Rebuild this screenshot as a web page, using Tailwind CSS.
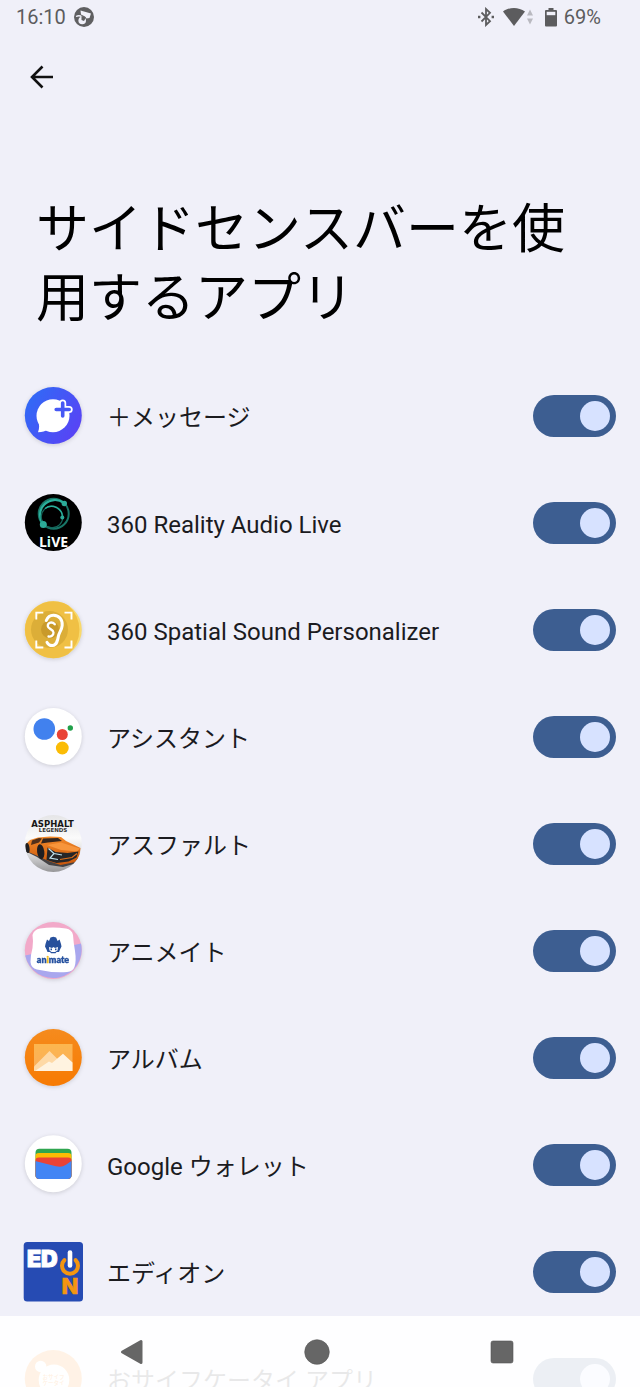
<!DOCTYPE html>
<html lang="ja">
<head>
    <meta charset="UTF-8">
    <meta name="viewport" content="width=device-width, initial-scale=1.0">
    <title>サイドセンスバーを使用するアプリ</title>
    <script src="https://cdn.jsdelivr.net/npm/@tailwindcss/browser@4"></script>
</head>
<body class="h-screen overflow-hidden bg-[#f0f0f9] text-[#1b1b1f] font-[Roboto,'Noto_Sans_CJK_JP',sans-serif]">
    <!-- Status bar -->
    <div class="flex h-[34px] items-center justify-between pl-4 pr-[39px] text-xl text-[#5c5c5e]">
        <div class="flex items-center gap-2">
            <span>16:10</span>
            <svg class="size-5" viewBox="0 0 20 20">
                <circle cx="10" cy="10" r="10" fill="#5f5f61"/>
                <path d="M6.500 3.500l10.500 3-1.500 4.500-3 .5-1.500-2-4-2z" fill="#f0f0f9"/>
                <circle cx="8.200" cy="13.500" r="3.800" fill="#f0f0f9"/>
                <path d="M2 9.500c2.500-1.200 4.500-.8 6 .5" fill="none" stroke="#f0f0f9" stroke-width="1.300"/>
                <path d="M7.500 9l4.500 1.500-2 3.500-2.500-1z" fill="#5f5f61"/>
            </svg>
        </div>
        <div class="flex items-center">
            <svg class="h-5 w-4" viewBox="0 0 16 20" fill="none" stroke="#5c5c5e" stroke-width="1.800">
                <path d="M3.500 5.500l8.500 8.700-4 3.800V2l4 3.800-8.500 8.700"/>
                <path d="M0 10h2.400M13.600 10H16" stroke-width="2.400"/>
            </svg>
            <svg class="ml-2 h-5 w-8" viewBox="0 0 32 20">
                <path d="M1 4.500C7.500-.3 16.500-.3 23 4.500L12 19z" fill="#5c5c5e"/>
                <path d="M25 8.500h6L28 2.500zM25 11.500h6l-3 6z" fill="#b9b9c0"/>
            </svg>
            <svg class="ml-[10px] h-5 w-4" viewBox="0 0 16 20">
                <path d="M4.500 1h5v2h2.500a1 1 0 0 1 1 1v14.500a1 1 0 0 1-1 1H2a1 1 0 0 1-1-1V4a1 1 0 0 1 1-1h2.500z" fill="#5c5c5e"/>
                <path d="M2.700 4.800h8.600v3.400H2.700z" fill="#f0f0f9"/>
            </svg>
            <span class="ml-1">69%</span>
        </div>
    </div>

    <!-- Header -->
    <header class="px-[26px] pt-[27px]">
        <button type="button" aria-label="戻る" class="block">
            <svg class="size-8" viewBox="0 0 32 32" fill="none" stroke="#111" stroke-width="2.600">
                <path d="M27 16H6M16.500 5.500L6 16l10.500 10.500"/>
            </svg>
        </button>
        <h1 class="mt-[103px] px-[10px] text-[53px] leading-[69px] text-black">サイドセンスバーを使用するアプリ</h1>
    </header>

    <!-- App list -->
    <ul class="mt-7">
        <li>
            <label class="flex h-[107px] items-center pl-[23px] pr-6">
                <svg class="size-[60px] shrink-0 drop-shadow-sm" viewBox="0 0 60 60">
                    <defs>
                        <linearGradient id="msg" x1="0" y1="0.200" x2="1" y2="0.800">
                            <stop offset="0" stop-color="#2f6bf6"/>
                            <stop offset="1" stop-color="#5b41f5"/>
                        </linearGradient>
                    </defs>
                    <circle cx="30.300" cy="29.500" r="28.500" fill="url(#msg)"/>
                    <circle cx="30" cy="29.700" r="16.500" fill="#fff"/>
                    <path d="M15 34c1.500 5 1.500 8 0 12.300 4.500 0 7-1 11-3z" fill="#fff"/>
                    <path d="M39.700 17v13M33.200 23.500h13" stroke="#fff" stroke-width="7" stroke-linecap="round"/>
                    <path d="M39.700 17v13M33.200 23.500h13" stroke="#4658f5" stroke-width="3.600" stroke-linecap="round"/>
                </svg>
                <span class="ml-6 flex-1 pt-1 text-2xl">＋メッセージ</span>
                <input type="checkbox" role="switch" checked class="h-[42px] w-[83px] shrink-0 appearance-none rounded-full bg-[#3d5e91] flex items-center justify-start checked:justify-end px-[6px] before:size-[30px] before:rounded-full before:bg-[#d7e2ff]">
            </label>
        </li>
        <li>
            <label class="flex h-[107px] items-center pl-[23px] pr-6">
                <svg class="size-[60px] shrink-0" viewBox="0 0 60 60">
                    <circle cx="30.300" cy="29.500" r="28.500" fill="#000"/>
                    <g fill="none" stroke="#2bb09c">
                        <circle cx="30.700" cy="20.700" r="15" stroke="#187567" stroke-width="2"/>
                        <path d="M20 31A15 15 0 0 1 41 10" stroke-width="2.200"/>
                        <circle cx="29" cy="24" r="10.800" stroke="#14665a" stroke-width="1.200"/>
                        <path d="M22 15.500a11 11 0 0 1 17.500 9" stroke-width="1.300"/>
                    </g>
                    <g fill="#2cab98">
                        <circle cx="41.300" cy="10.500" r="2.700"/>
                        <circle cx="20.300" cy="31.500" r="3.500"/>
                        <circle cx="39.300" cy="24.500" r="2"/>
                    </g>
                    <text x="30.500" y="54" text-anchor="middle" fill="#fff" font-family="Open Sans" font-weight="700" font-size="14">L<tspan fill="#c9fff4">i</tspan>VE</text>
                </svg>
                <span class="ml-6 flex-1 pt-1 text-2xl">360 Reality Audio Live</span>
                <input type="checkbox" role="switch" checked class="h-[42px] w-[83px] shrink-0 appearance-none rounded-full bg-[#3d5e91] flex items-center justify-start checked:justify-end px-[6px] before:size-[30px] before:rounded-full before:bg-[#d7e2ff]">
            </label>
        </li>
        <li>
            <label class="flex h-[107px] items-center pl-[23px] pr-6">
                <svg class="size-[60px] shrink-0 drop-shadow-sm" viewBox="0 0 60 60">
                    <circle cx="30.300" cy="29.700" r="28.500" fill="#f9d96b"/>
                    <path d="M45 5.200A28.500 28.500 0 1 0 45 54.200 32 32 0 0 0 45 5.200z" fill="#f0c044"/>
                    <circle cx="26.500" cy="29.500" r="18.500" fill="#dcae38"/>
                    <circle cx="27" cy="29.500" r="9" fill="#c99a2b"/>
                    <g fill="none" stroke="#fff">
                        <path d="M13.300 19.500V12.600h7M41.500 12.600h7v7M48.500 40.500v7h-7M20.300 47.500h-7v-7" stroke-width="1.900"/>
                        <path d="M23.300 20.500c1.500-3.700 4-5.300 7.300-5.200 5.700.2 9 4.500 8.600 10-.3 4.500-3 7-3.700 10.500-.8 4.500-1.500 9.400-6 9.800-3 .2-4.500-1.300-5.500-3.300" stroke-width="3" stroke-linecap="round"/>
                        <path d="M31.800 24.300c-2.800-3.300-7.200-1.600-7 1.800.2 3.200 5.600 2.900 5.700 6.400.1 3-2.500 4.300-5 4" stroke-width="2.300" stroke-linecap="round"/>
                    </g>
                </svg>
                <span class="ml-6 flex-1 pt-1 text-2xl">360 Spatial Sound Personalizer</span>
                <input type="checkbox" role="switch" checked class="h-[42px] w-[83px] shrink-0 appearance-none rounded-full bg-[#3d5e91] flex items-center justify-start checked:justify-end px-[6px] before:size-[30px] before:rounded-full before:bg-[#d7e2ff]">
            </label>
        </li>
        <li>
            <label class="flex h-[107px] items-center pl-[23px] pr-6">
                <svg class="size-[60px] shrink-0 drop-shadow-sm" viewBox="0 0 60 60">
                    <circle cx="30.300" cy="29.500" r="28.500" fill="#fff"/>
                    <circle cx="21.300" cy="22" r="10.800" fill="#4181ee"/>
                    <circle cx="39.300" cy="27.500" r="5.500" fill="#e94335"/>
                    <circle cx="39.300" cy="41" r="6.400" fill="#fbbc05"/>
                    <circle cx="47.300" cy="21" r="2.700" fill="#21a04a"/>
                </svg>
                <span class="ml-6 flex-1 pt-1 text-2xl">アシスタント</span>
                <input type="checkbox" role="switch" checked class="h-[42px] w-[83px] shrink-0 appearance-none rounded-full bg-[#3d5e91] flex items-center justify-start checked:justify-end px-[6px] before:size-[30px] before:rounded-full before:bg-[#d7e2ff]">
            </label>
        </li>
        <li>
            <label class="flex h-[107px] items-center pl-[23px] pr-6">
                <svg class="size-[60px] shrink-0" viewBox="0 0 60 60">
                    <defs>
                        <clipPath id="round"><circle cx="30.300" cy="29.500" r="28.500"/></clipPath>
                        <linearGradient id="road" x1="0" y1="0" x2="0" y2="1">
                            <stop offset="0" stop-color="#e4e4e6"/>
                            <stop offset="0.400" stop-color="#fbfbfb"/>
                            <stop offset="0.700" stop-color="#d4d4d6"/>
                            <stop offset="1" stop-color="#8f8f91"/>
                        </linearGradient>
                        <linearGradient id="paint" x1="0" y1="0" x2="0" y2="1">
                            <stop offset="0" stop-color="#f28a2a"/>
                            <stop offset="1" stop-color="#c9570c"/>
                        </linearGradient>
                    </defs>
                    <g clip-path="url(#round)">
                        <path d="M0 0h60v60H0z" fill="url(#road)"/>
                        <path d="M2 37l12 6 12 8 14 2 14-4 2-6-20-4z" fill="#454345"/>
                        <path d="M3 30l4-4 8-2.500 12-1 11 .5 5 4L57.500 34l-1 8-4 6-15 3-12-4-13-6-7-3-2.500-3z" fill="url(#paint)"/>
                        <path d="M9 26.500l7-2.500 3 .5-3 4-8 2.500z" fill="#51301b"/>
                        <path d="M20 24.500l15-.5 4 3-14 1.500-7 1z" fill="#33261f"/>
                        <path d="M24 31l14-2.500 19 6-3 3-16-1.500z" fill="#f7953b"/>
                        <ellipse cx="17.700" cy="37.700" rx="3.600" ry="7.500" fill="#1f1f22" transform="rotate(-8 17.700 37.700)"/>
                        <ellipse cx="4.500" cy="34" rx="2" ry="5" fill="#1f1f22" transform="rotate(-8 4.500 34)"/>
                        <path d="M24.500 33.500l8 4.500 12 1 11-1.500-2 6-8 4-12 1.500-10-3z" fill="#262628"/>
                        <path d="M25.500 34.500l5.500 5-4 4.500 8 1.500M31 39.500l8 1.500" fill="none" stroke="#bfe3ee" stroke-width="1.200"/>
                        <path d="M37 45.500l12-2 5-4" fill="none" stroke="#e0701a" stroke-width="1.200"/>
                    </g>
                    <text x="29.500" y="12.500" text-anchor="middle" fill="#161616" font-family="DejaVu Sans" font-weight="700" font-size="8.500">ASPHALT</text>
                    <text x="30" y="18" text-anchor="middle" fill="#333" font-family="DejaVu Sans" font-weight="700" font-size="5.500">LEGENDS</text>
                </svg>
                <span class="ml-6 flex-1 pt-1 text-2xl">アスファルト</span>
                <input type="checkbox" role="switch" checked class="h-[42px] w-[83px] shrink-0 appearance-none rounded-full bg-[#3d5e91] flex items-center justify-start checked:justify-end px-[6px] before:size-[30px] before:rounded-full before:bg-[#d7e2ff]">
            </label>
        </li>
        <li>
            <label class="flex h-[107px] items-center pl-[23px] pr-6">
                <svg class="size-[60px] shrink-0 drop-shadow-sm" viewBox="0 0 60 60">
                    <circle cx="30.300" cy="29.500" r="28.500" fill="#f2a9c9"/>
                    <path d="M2.200 34.500L58 22.500A28.500 28.500 0 0 1 2.200 34.500z" fill="#a9a7ee"/>
                    <path d="M9.500 14Q11 8.500 17 7.500 30 5.500 43 7.500 49 8.500 50 14 50.500 22 52 30 53.500 40 51.500 46 50 50.500 44 51 29 52 14 48.500 8 47 7.500 41 7.500 34 9.500 27 10.500 20 9.500 14z" fill="#fff"/>
                    <path d="M22.500 23l1.500-4.500 2 1.500 1.500-3.500 2.800-.8 2.800.8 1.500 3.500 2-1.500L38 23l.5 2.500-1.500 3-1 2.500h-2.500l-1 1.200h-4.500L27 31h-2.500l-1-2.500-1.500-3z" fill="#27509c"/>
                    <path d="M26 26l3 1 1.500-1 1.500 1 3-1-.5 3.500-2.500 1.500h-3.500L26.500 29.500z" fill="#fff"/>
                    <path d="M27.500 27.500h1.500v1.700h-1.500zM32 27.500h1.500v1.700H32z" fill="#27509c"/>
                    <text x="30" y="42" text-anchor="middle" fill="#24509f" stroke="#24509f" stroke-width="0.400" font-family="Lato" font-weight="900" font-size="9">an<tspan fill="#f5bd1b" stroke="#f5bd1b">i</tspan>mate</text>
                </svg>
                <span class="ml-6 flex-1 pt-1 text-2xl">アニメイト</span>
                <input type="checkbox" role="switch" checked class="h-[42px] w-[83px] shrink-0 appearance-none rounded-full bg-[#3d5e91] flex items-center justify-start checked:justify-end px-[6px] before:size-[30px] before:rounded-full before:bg-[#d7e2ff]">
            </label>
        </li>
        <li>
            <label class="flex h-[107px] items-center pl-[23px] pr-6">
                <svg class="size-[60px] shrink-0 drop-shadow-sm" viewBox="0 0 60 60">
                    <defs>
                        <linearGradient id="album" x1="0" y1="0" x2="0" y2="1">
                            <stop offset="0" stop-color="#f58b1d"/>
                            <stop offset="1" stop-color="#f77a02"/>
                        </linearGradient>
                        <linearGradient id="sky" x1="0" y1="0" x2="0" y2="1">
                            <stop offset="0" stop-color="#fcb64e"/>
                            <stop offset="1" stop-color="#fbae5c"/>
                        </linearGradient>
                    </defs>
                    <circle cx="30.300" cy="29.500" r="28.500" fill="url(#album)"/>
                    <path d="M11 16h38.500v27H11z" fill="url(#sky)"/>
                    <path d="M11 38.500L26.500 23 40 36.500V43H11z" fill="#fed9a6"/>
                    <path d="M12 43L26 33.500l3 1.500L40 25.700l9.500 8.800V43z" fill="#fff3e0"/>
                </svg>
                <span class="ml-6 flex-1 pt-1 text-2xl">アルバム</span>
                <input type="checkbox" role="switch" checked class="h-[42px] w-[83px] shrink-0 appearance-none rounded-full bg-[#3d5e91] flex items-center justify-start checked:justify-end px-[6px] before:size-[30px] before:rounded-full before:bg-[#d7e2ff]">
            </label>
        </li>
        <li>
            <label class="flex h-[107px] items-center pl-[23px] pr-6">
                <svg class="size-[60px] shrink-0 drop-shadow-sm" viewBox="0 0 60 60">
                    <defs>
                        <clipPath id="wallet"><rect x="12.500" y="13.700" width="36" height="30.300" rx="4"/></clipPath>
                    </defs>
                    <circle cx="30.300" cy="28.700" r="28.500" fill="#fff"/>
                    <g clip-path="url(#wallet)">
                        <path d="M12 13h37v32H12z" fill="#2fa54f"/>
                        <path d="M12 22a4 4 0 0 1 4-4h29a4 4 0 0 1 4 4v22H12z" fill="#fbbc04"/>
                        <path d="M12 26.500a4 4 0 0 1 4-4h29a4 4 0 0 1 4 4V44H12z" fill="#ea4335"/>
                        <path d="M12 26l21 5.200c4 1 7 .5 10-1.500l6-4.200V45H12z" fill="#4285f4"/>
                    </g>
                </svg>
                <span class="ml-6 flex-1 pt-1 text-2xl">Google ウォレット</span>
                <input type="checkbox" role="switch" checked class="h-[42px] w-[83px] shrink-0 appearance-none rounded-full bg-[#3d5e91] flex items-center justify-start checked:justify-end px-[6px] before:size-[30px] before:rounded-full before:bg-[#d7e2ff]">
            </label>
        </li>
        <li>
            <label class="flex h-[107px] items-center pl-[23px] pr-6">
                <svg class="size-[60px] shrink-0" viewBox="0 0 60 60">
                    <rect x="0.700" y="0" width="59.300" height="59.500" rx="3.500" fill="#264bb3"/>
                    <text x="4" y="25" fill="#fff" stroke="#fff" stroke-width="1" font-family="Inter" font-weight="900" font-size="23">ED</text>
                    <path d="M41.500 18a8 8 0 1 0 11 0" fill="none" stroke="#f39510" stroke-width="4" stroke-linecap="round"/>
                    <path d="M47 10.500v13" stroke="#264bb3" stroke-width="7" stroke-linecap="round"/>
                    <path d="M47 10.500v13" stroke="#fff" stroke-width="4.600" stroke-linecap="round"/>
                    <text x="47" y="51.700" text-anchor="middle" fill="#f39510" stroke="#f39510" stroke-width="0.600" font-family="Inter" font-weight="800" font-size="22">N</text>
                </svg>
                <span class="ml-6 flex-1 pt-1 text-2xl">エディオン</span>
                <input type="checkbox" role="switch" checked class="h-[42px] w-[83px] shrink-0 appearance-none rounded-full bg-[#3d5e91] flex items-center justify-start checked:justify-end px-[6px] before:size-[30px] before:rounded-full before:bg-[#d7e2ff]">
            </label>
        </li>
        <li>
            <label class="flex h-[107px] items-center pl-[23px] pr-6">
                <svg class="size-[60px] shrink-0" viewBox="0 0 60 60">
                    <circle cx="30.300" cy="29.500" r="28.500" fill="#ff7f00"/>
                    <circle cx="17.700" cy="17.500" r="5.700" fill="#fff"/>
                    <ellipse cx="31" cy="31" rx="15.300" ry="15.500" fill="#fff"/>
                    <g fill="#ff7f00" text-anchor="middle" font-family="Noto Sans CJK JP" font-weight="700" font-size="5.500">
                        <text x="30.500" y="30">おサイフ</text>
                        <text x="30.500" y="36">ケータイ</text>
                    </g>
                </svg>
                <span class="ml-6 flex-1 pt-1 text-2xl">おサイフケータイ アプリ</span>
                <input type="checkbox" role="switch" checked class="h-[42px] w-[83px] shrink-0 appearance-none rounded-full bg-[#3d5e91] flex items-center justify-start checked:justify-end px-[6px] before:size-[30px] before:rounded-full before:bg-[#d7e2ff]">
            </label>
        </li>
    </ul>

    <!-- Navigation bar -->
    <nav class="fixed inset-x-0 bottom-0 grid h-[71px] grid-cols-3 items-center justify-items-center bg-white/90 pl-10 pr-[46px]">
        <button type="button" aria-label="戻る">
            <svg class="size-7" viewBox="0 0 28 28"><path d="M23 3.500v21L4.500 14z" fill="#666" stroke="#666" stroke-width="3" stroke-linejoin="round"/></svg>
        </button>
        <button type="button" aria-label="ホーム">
            <svg class="size-7" viewBox="0 0 28 28"><circle cx="14" cy="14" r="12.300" fill="#666" stroke="#555" stroke-width="0.600"/></svg>
        </button>
        <button type="button" aria-label="アプリ履歴">
            <svg class="size-7" viewBox="0 0 28 28"><rect x="3" y="3" width="22" height="22" rx="2" fill="#666" stroke="#555" stroke-width="0.600"/></svg>
        </button>
    </nav>
</body>
</html>
